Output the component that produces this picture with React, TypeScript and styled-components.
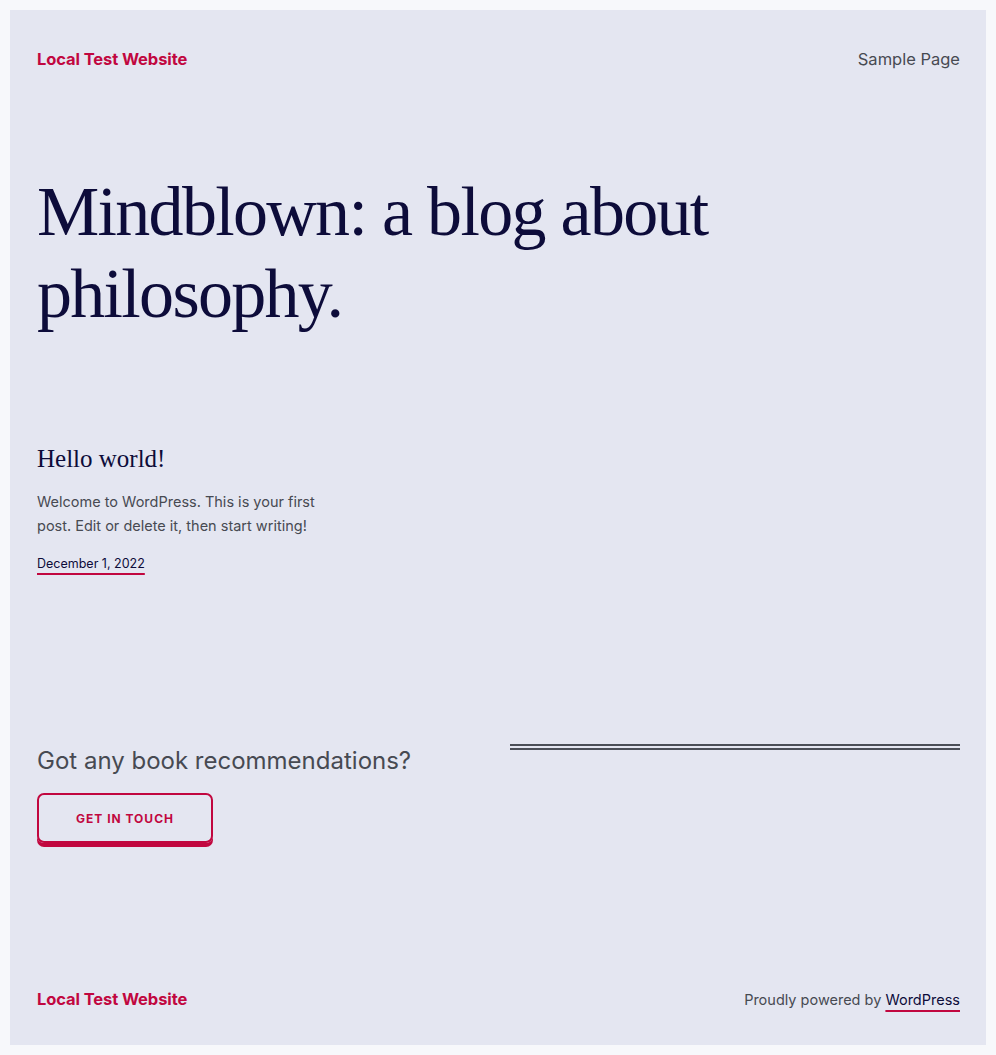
import React from "react";
import styled, { createGlobalStyle } from "styled-components";

const red = "#c1073f";
const navy = "#0d0c3a";
const gray = "#474a52";

const GlobalStyle = createGlobalStyle`
  html, body {
    margin: 0;
    padding: 0;
    background: #f7f8fb;
  }
  body {
    padding: 10px;
    font-family: "Inter", "Noto Sans", sans-serif;
  }
`;

const Panel = styled.div`
  background: #e4e6f1;
  min-height: 1035px;
  box-sizing: border-box;
  padding: 0 26px 0 27px;
  display: flex;
  flex-direction: column;
`;

const Header = styled.header`
  display: flex;
  justify-content: space-between;
  align-items: center;
  height: 98px;
`;

const SiteTitle = styled.a`
  color: ${red};
  font-weight: 700;
  font-size: 16.5px;
  text-decoration: none;
  letter-spacing: -0.1px;
`;

const NavLink = styled.a`
  color: ${gray};
  font-size: 16.5px;
  text-decoration: none;
`;

const Hero = styled.h1`
  margin: 63px 0 0 0;
  font-family: "Liberation Serif", "DejaVu Serif", serif;
  font-weight: 400;
  font-size: 70px;
  line-height: 82px;
  color: ${navy};
  max-width: 700px;
  letter-spacing: -1.7px;
`;

const Post = styled.article`
  margin-top: 107px;
  max-width: 290px;
`;

const PostTitle = styled.h2`
  margin: 0;
  font-family: "Liberation Serif", "DejaVu Serif", serif;
  font-weight: 400;
  font-size: 25px;
  line-height: 34px;
  color: ${navy};
`;

const Excerpt = styled.p`
  margin: 14px 0 0 0;
  font-size: 14.5px;
  line-height: 24px;
  color: ${gray};
`;

const DateLink = styled.a`
  display: inline-block;
  margin-top: 18px;
  font-size: 12.5px;
  color: ${navy};
  text-decoration: underline;
  text-decoration-color: ${red};
  text-decoration-thickness: 2px;
  text-underline-offset: 5px;
`;

const Cta = styled.section`
  margin-top: 162px;
  display: grid;
  grid-template-columns: 1fr 1fr;
  column-gap: 22px;
  align-items: start;
`;

const CtaHeading = styled.h3`
  margin: 11px 0 0 0;
  font-weight: 400;
  font-size: 24px;
  line-height: 32px;
  color: ${gray};
`;

const Button = styled.a`
  display: inline-flex;
  align-items: center;
  justify-content: center;
  margin-top: 16px;
  width: 176px;
  height: 50px;
  box-sizing: border-box;
  border: 2px solid ${red};
  border-radius: 7px;
  box-shadow: 0 4px 0 ${red};
  color: ${red};
  font-size: 12px;
  font-weight: 700;
  letter-spacing: 1px;
  text-decoration: none;
`;

const DoubleRule = styled.hr`
  margin: 10px 0 0 0;
  height: 2px;
  border: none;
  border-top: 2px solid #4b4e57;
  border-bottom: 2px solid #4b4e57;
`;

const Footer = styled.footer`
  margin-top: auto;
  display: flex;
  justify-content: space-between;
  align-items: center;
  height: 92px;
`;

const Credit = styled.span`
  font-size: 14.5px;
  color: ${gray};
`;

const CreditLink = styled.a`
  color: ${navy};
  text-decoration: underline;
  text-decoration-color: ${red};
  text-decoration-thickness: 2px;
  text-underline-offset: 5px;
`;

export default function App() {
  return (
    <>
      <GlobalStyle />
      <Panel>
        <Header>
          <SiteTitle>Local Test Website</SiteTitle>
          <NavLink>Sample Page</NavLink>
        </Header>

        <Hero>Mindblown: a blog about philosophy.</Hero>

        <Post>
          <PostTitle>Hello world!</PostTitle>
          <Excerpt>
            Welcome to WordPress. This is your first post. Edit or delete it,
            then start writing!
          </Excerpt>
          <DateLink>December 1, 2022</DateLink>
        </Post>

        <Cta>
          <div>
            <CtaHeading>Got any book recommendations?</CtaHeading>
            <Button>GET IN TOUCH</Button>
          </div>
          <DoubleRule />
        </Cta>

        <Footer>
          <SiteTitle>Local Test Website</SiteTitle>
          <Credit>
            Proudly powered by <CreditLink>WordPress</CreditLink>
          </Credit>
        </Footer>
      </Panel>
    </>
  );
}
